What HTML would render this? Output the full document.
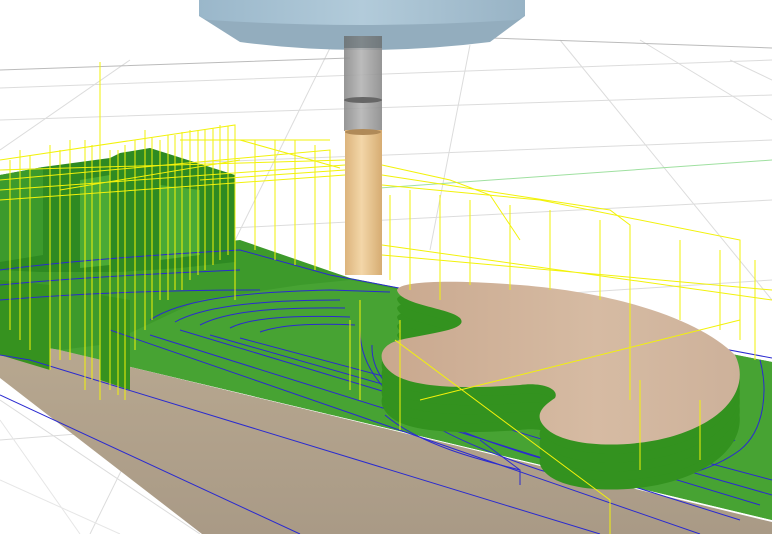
<!DOCTYPE html>
<html><head><meta charset="utf-8"><style>
html,body{margin:0;padding:0;background:#fff;width:772px;height:534px;overflow:hidden}
svg{display:block}
</style></head><body>
<svg width="772" height="534" viewBox="0 0 772 534" xmlns="http://www.w3.org/2000/svg">
<defs>
<linearGradient id="shaft" x1="0" x2="1"><stop offset="0" stop-color="#8a8a8a"/><stop offset=".45" stop-color="#b4b4b4"/><stop offset="1" stop-color="#8a8a8a"/></linearGradient>
<linearGradient id="cut" x1="0" x2="1"><stop offset="0" stop-color="#dcb47c"/><stop offset=".45" stop-color="#f3d6a8"/><stop offset="1" stop-color="#d6ac72"/></linearGradient>
<linearGradient id="holder" x1="0" x2="1"><stop offset="0" stop-color="#9ab7ca"/><stop offset=".5" stop-color="#b2cbda"/><stop offset="1" stop-color="#98b3c5"/></linearGradient>
<linearGradient id="tan" x1="0" y1="0" x2="0" y2="1"><stop offset="0" stop-color="#b8a890"/><stop offset="1" stop-color="#a99a86"/></linearGradient>
<linearGradient id="top" x1="0" x2="1"><stop offset="0" stop-color="#c9a88e"/><stop offset=".6" stop-color="#d6bba3"/><stop offset="1" stop-color="#cdb19a"/></linearGradient>
<path id="kid" d="M397,290 C400,280 460,280 520,285 C620,293 700,320 735,355 C750,385 730,420 670,437 C630,448 570,448 548,430 C530,415 545,405 555,398 C560,388 540,382 520,385 C480,388 420,390 395,375 C375,362 378,345 400,340 C430,333 470,330 460,318 C450,308 400,305 397,290 Z"/>
</defs>
<!-- grid -->
<g stroke="#dcdcdc" stroke-width="1" fill="none">
<path d="M0,88 L772,60 M0,120 L772,95 M0,170 L772,140 M0,240 L772,200 M0,330 L772,280 M0,440 L772,380"/>
<path d="M130,60 L0,150 M330,48 L90,534 M470,45 L430,250 M560,40 L772,300 M640,40 L772,120 M730,60 L772,80 M0,400 L200,534"/>
<path d="M0,480 L120,534 M0,420 L80,534" stroke="#e6e6e6"/>
<path d="M0,70 L350,58 M490,38 L772,48" stroke="#bbb"/>
</g>
<path d="M380,188 L772,160" stroke="#9fe0a0" stroke-width="1"/>
<!-- base block -->
<polygon points="0,340 60,350 772,522 772,534 202,534 0,378" fill="url(#tan)"/>
<polygon points="0,265 240,240 350,278 772,362 772,520 60,350 0,340" fill="#3d9a2b"/>
<polygon points="130,333 200,300 300,285 350,280 772,362 772,520 60,350 100,345" fill="#47a333"/>
<!-- left blocks -->
<polygon points="0,175 43,167 110,158 120,153 150,148 235,175 235,262 180,268 120,272 40,272 0,270" fill="#2e8a22"/>
<polygon points="0,175 43,167 43,255 0,262" fill="#3c9a2c"/>
<polygon points="80,180 110,175 110,265 80,268" fill="#4aaa35"/>
<polygon points="160,185 200,190 200,255 160,260" fill="#4aaa35"/>
<polygon points="0,280 50,285 50,370 0,355" fill="#36921f"/>
<polygon points="100,295 130,300 130,390 100,380" fill="#36921f"/>
<!-- blue toolpaths -->
<g fill="none" stroke="#2a2ad0" stroke-width="1">
<path d="M0,395 L300,534"/>
<path d="M0,355 L30,360 L600,534"/>
<path d="M110,330 L700,534"/>
<path d="M150,335 L740,520 M180,330 L760,505 M210,335 L772,495 M240,338 L772,480"/>
<path d="M150,320 C180,300 240,292 330,290 L390,292"/>
<path d="M175,322 C200,308 250,300 340,300"/>
<path d="M200,325 C225,312 270,307 345,308"/>
<path d="M230,328 C250,318 290,315 350,317"/>
<path d="M260,332 C280,325 310,323 355,325"/>
<path d="M0,270 C60,262 150,255 240,250 L330,275 L772,358"/>
<path d="M0,285 C50,280 120,275 240,270 M0,300 C60,295 150,290 260,290"/>
<path d="M360,330 C360,400 450,440 540,470 C620,495 700,480 740,450 C765,430 768,390 760,360"/>
<path d="M372,345 C370,400 450,430 530,455 C610,480 690,470 735,440"/>
<path d="M385,415 C420,445 480,460 520,470 M480,440 L520,470 L520,485"/>
</g>
<!-- kidney boss wall -->
<g fill="#33921f">
<use href="#kid" transform="translate(0,45)"/>
<use href="#kid" transform="translate(0,36)"/>
<use href="#kid" transform="translate(0,27)"/>
<use href="#kid" transform="translate(0,18)"/>
<use href="#kid" transform="translate(0,9)"/>
</g>
<use href="#kid" fill="url(#top)"/>
<!-- spindle holder -->
<path d="M199,0 L525,0 L525,16 L490,42 Q362,58 240,42 L199,16 Z" fill="#93adbe"/>
<path d="M199,0 L525,0 L525,14 Q525,18 515,20 Q362,30 209,20 Q199,18 199,14 Z" fill="url(#holder)"/>
<rect x="344" y="36" width="38" height="95" fill="url(#shaft)" opacity=".9"/>
<rect x="344" y="36" width="38" height="12" fill="#5f6a70" opacity=".6"/>
<ellipse cx="363" cy="100" rx="19" ry="3" fill="#666"/>
<rect x="345" y="130" width="37" height="145" fill="url(#cut)"/>
<ellipse cx="363" cy="132" rx="18" ry="3" fill="#b08a58"/>
<!-- yellow toolpaths -->
<g fill="none" stroke="#f2f20a" stroke-width="1">
<path d="M0,160 L235,125 L235,300 M20,150 L20,340 M50,145 L50,370 M70,140 L70,360 M85,140 L85,390 M100,62 L100,400 M110,150 L110,390 M125,145 L125,400 M145,130 L145,330 M160,140 L160,300 M175,135 L175,290 M190,130 L190,280 M205,130 L205,270 M220,125 L220,260"/>
<path d="M10,160 L10,330 M30,155 L30,350 M60,150 L60,360 M92,145 L92,380 M118,150 L118,395 M135,140 L135,350 M152,138 L152,320 M168,135 L168,300 M182,132 L182,290 M198,130 L198,275 M213,128 L213,265 M228,126 L228,255 M255,140 L255,250 M275,140 L275,260 M295,140 L295,265 M315,145 L315,270"/>
<path d="M0,180 L330,150 L330,270 M180,140 L330,140 M240,140 L340,168 M200,180 L345,170 M0,200 L345,175 M60,190 L240,160 M0,170 L345,160 M0,190 L345,165"/>
<path d="M382,165 L450,180 L490,195 L520,240 M382,175 L610,210 L630,225 L630,400 M382,185 L540,200 L740,240 L740,340"/>
<path d="M390,195 L390,280 M410,190 L410,290 M440,195 L440,300 M470,200 L470,285 M510,205 L510,290 M550,210 L550,290 M600,220 L600,300 M680,240 L680,320 M720,250 L720,330 M755,260 L755,360"/>
<path d="M350,320 L350,390 M360,300 L360,400 M400,320 L400,430 M420,400 L740,320 M395,340 L610,500 L610,534 M640,380 L640,470 M700,400 L700,460"/>
<path d="M382,245 L772,300 M382,255 L772,290"/>
</g>
</svg>
</body></html>
